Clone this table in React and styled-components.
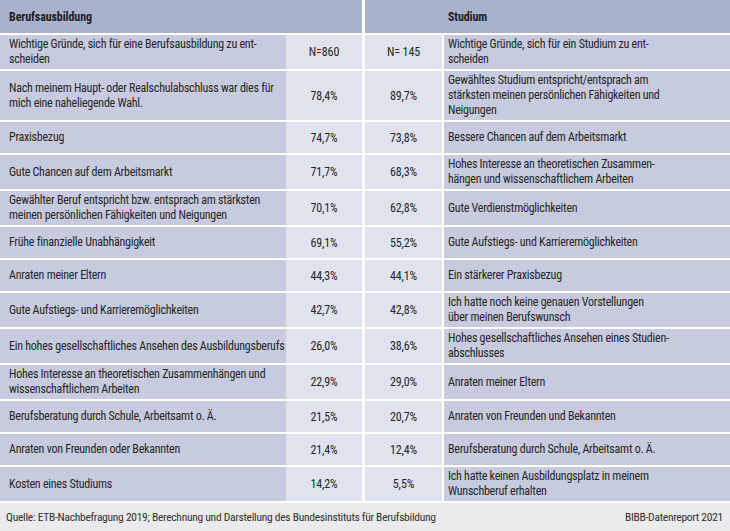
import React from 'react';
import styled, { createGlobalStyle } from 'styled-components';

const GlobalStyle = createGlobalStyle`
  html, body {
    margin: 0;
    padding: 0;
    background: #ffffff;
  }
  body {
    font-family: "Roboto Condensed", "Liberation Sans", sans-serif;
    color: #262626;
  }
`;

const Page = styled.div`
  width: 730px;
  height: 531px;
  display: flex;
  flex-direction: column;
  background: #ffffff;
`;

const Table = styled.div`
  display: flex;
  flex-direction: column;
  gap: 2px;
`;

const Row = styled.div`
  display: grid;
  grid-template-columns: 286px 76px 80px 1fr;
  min-height: ${(p) => (p.$header ? '33px' : '31px')};
`;

const HeaderCell = styled.div`
  grid-column: span 2;
  display: flex;
  align-items: center;
  background: #a8b1cd;
  font-size: 12px;
  font-weight: 700;
  letter-spacing: -0.1px;
  color: #1e1e1e;
  margin-left: ${(p) => p.$inset || 0}px;
  padding-left: ${(p) => p.$pad}px;
`;

const TextCell = styled.div`
  display: flex;
  align-items: center;
  background: #c7cbdf;
  font-size: 12px;
  line-height: 15px;
  letter-spacing: -0.25px;
  white-space: nowrap;
  overflow: hidden;
  padding: 2px 4px 2px ${(p) => p.$pad}px;
  margin-left: ${(p) => p.$inset || 0}px;
`;

const NumCell = styled.div`
  display: flex;
  align-items: center;
  justify-content: center;
  background: #e0e2ed;
  font-size: 12px;
  letter-spacing: -0.1px;
  margin-left: ${(p) => p.$inset || 0}px;
`;

const Footer = styled.div`
  flex: 1;
  margin-top: 2px;
  display: flex;
  align-items: center;
  justify-content: space-between;
  background: #ebebed;
  padding: 0 7px 0 6px;
  font-size: 11.5px;
  letter-spacing: -0.27px;
  color: #303030;
`;

const rows = [
  {
    left: ['Wichtige Gründe, sich für eine Berufsausbildung zu ent-', 'scheiden'],
    lv: 'N=860',
    rv: 'N= 145',
    right: ['Wichtige Gründe, sich für ein Studium zu ent-', 'scheiden'],
  },
  {
    left: ['Nach meinem Haupt- oder Realschulabschluss war dies für', 'mich eine naheliegende Wahl.'],
    lv: '78,4%',
    rv: '89,7%',
    right: ['Gewähltes Studium entspricht/entsprach am', 'stärksten meinen persönlichen Fähigkeiten und', 'Neigungen'],
  },
  { left: ['Praxisbezug'], lv: '74,7%', rv: '73,8%', right: ['Bessere Chancen auf dem Arbeitsmarkt'] },
  {
    left: ['Gute Chancen auf dem Arbeitsmarkt'],
    lv: '71,7%',
    rv: '68,3%',
    right: ['Hohes Interesse an theoretischen Zusammen-', 'hängen und wissenschaftlichem Arbeiten'],
  },
  {
    left: ['Gewählter Beruf entspricht bzw. entsprach am stärksten', 'meinen persönlichen Fähigkeiten und Neigungen'],
    lv: '70,1%',
    rv: '62,8%',
    right: ['Gute Verdienstmöglichkeiten'],
  },
  { left: ['Frühe finanzielle Unabhängigkeit'], lv: '69,1%', rv: '55,2%', right: ['Gute Aufstiegs- und Karrieremöglichkeiten'] },
  { left: ['Anraten meiner Eltern'], lv: '44,3%', rv: '44,1%', right: ['Ein stärkerer Praxisbezug'] },
  {
    left: ['Gute Aufstiegs- und Karrieremöglichkeiten'],
    lv: '42,7%',
    rv: '42,8%',
    right: ['Ich hatte noch keine genauen Vorstellungen', 'über meinen Berufswunsch'],
  },
  {
    left: ['Ein hohes gesellschaftliches Ansehen des Ausbildungsberufs'],
    lv: '26,0%',
    rv: '38,6%',
    right: ['Hohes gesellschaftliches Ansehen eines Studien-', 'abschlusses'],
  },
  {
    left: ['Hohes Interesse an theoretischen Zusammenhängen und', 'wissenschaftlichem Arbeiten'],
    lv: '22,9%',
    rv: '29,0%',
    right: ['Anraten meiner Eltern'],
  },
  { left: ['Berufsberatung durch Schule, Arbeitsamt o. Ä.'], lv: '21,5%', rv: '20,7%', right: ['Anraten von Freunden und Bekannten'] },
  { left: ['Anraten von Freunden oder Bekannten'], lv: '21,4%', rv: '12,4%', right: ['Berufsberatung durch Schule, Arbeitsamt o. Ä.'] },
  {
    left: ['Kosten eines Studiums'],
    lv: '14,2%',
    rv: '5,5%',
    right: ['Ich hatte keinen Ausbildungsplatz in meinem', 'Wunschberuf erhalten'],
  },
];

const Lines = ({ lines }) => (
  <span>
    {lines.map((l, i) => (
      <React.Fragment key={i}>
        {i > 0 && <br />}
        {l}
      </React.Fragment>
    ))}
  </span>
);

export default function App() {
  return (
    <Page>
      <GlobalStyle />
      <Table>
        <Row $header>
          <HeaderCell $pad={9}>Berufsausbildung</HeaderCell>
          <HeaderCell $inset={3} $pad={83}>Studium</HeaderCell>
        </Row>
        {rows.map((r, i) => (
          <Row key={i}>
            <TextCell $pad={9}>
              <Lines lines={r.left} />
            </TextCell>
            <NumCell>{r.lv}</NumCell>
            <NumCell $inset={3}>{r.rv}</NumCell>
            <TextCell $inset={2} $pad={4}>
              <Lines lines={r.right} />
            </TextCell>
          </Row>
        ))}
      </Table>
      <Footer>
        <span>Quelle: ETB-Nachbefragung 2019; Berechnung und Darstellung des Bundesinstituts für Berufsbildung</span>
        <span>BIBB-Datenreport 2021</span>
      </Footer>
    </Page>
  );
}
